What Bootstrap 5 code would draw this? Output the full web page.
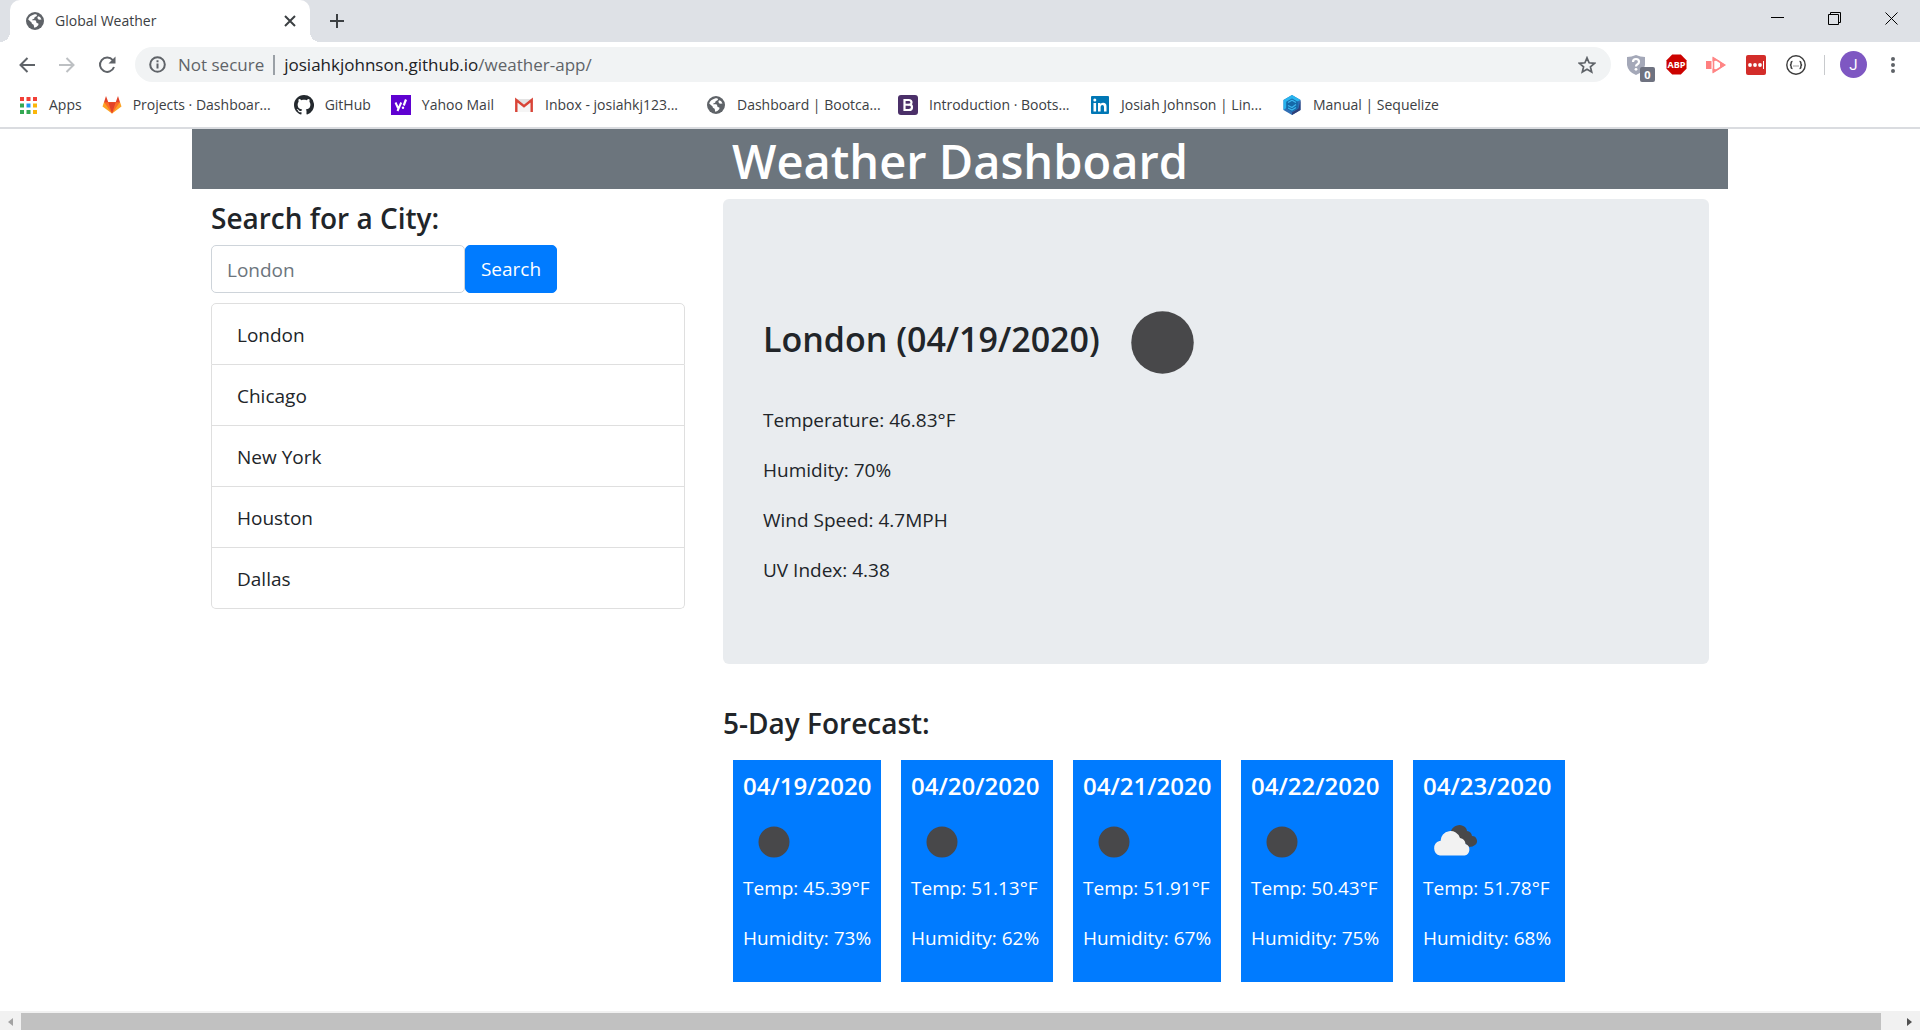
<!DOCTYPE html>
<html lang="en">
<head>
<meta charset="utf-8">
<meta name="viewport" content="width=device-width, initial-scale=1">
<title>Global Weather</title>
<link rel="stylesheet" href="https://cdn.jsdelivr.net/npm/bootstrap@5.3.0/dist/css/bootstrap.min.css">
<style>
:root{--blue:#007bff;--chrome:#dee1e6;--ink:#212529;--glyph:#5f6368}
body{font-family:"Open Sans","Noto Sans",sans-serif;font-size:19px;line-height:30px;color:var(--ink);background:#fff;min-height:100vh}
svg{display:block;flex:none}
button.bare{border:0;background:none;padding:0;color:inherit;display:flex;align-items:center;justify-content:center}
/* browser frame */
.frame-text{font-size:14px;line-height:20px;color:#3c4043}
.tabstrip{background:var(--chrome);height:42px;padding-left:10px}
.tab{position:relative;width:300px;height:42px;padding:0 14px 0 16px;background:#fff;border-radius:10px 10px 0 0;gap:11px}
.tab::before,.tab::after{content:"";position:absolute;bottom:0;width:10px;height:10px}
.tab::before{left:-10px;background:radial-gradient(circle at 0 0,transparent 10px,#fff 10px)}
.tab::after{right:-10px;background:radial-gradient(circle at 100% 0,transparent 10px,#fff 10px)}
.new-tab{width:54px}
.win-btn{width:57px;height:36px}
.toolbar{height:45px;padding:0 7px}
.tool-btn{width:40px;height:36px;color:var(--glyph)}
.omnibox{height:35px;border-radius:18px;background:#f1f3f4;padding:0 15px 0 14px;margin-left:8px;margin-right:5px;font-size:17px;color:var(--glyph)}
.omnibox .divider{width:2px;height:20px;background:#9aa0a6;margin:0 9px}
.toolbar .split{width:1px;height:20px;background:#c8cacd;margin:0 8px}
.address{color:var(--glyph);min-width:0}
.host{color:#202124}
.ext-badge{position:absolute;left:24px;top:20px;width:15px;height:15px;border-radius:2px;background:#6e7280;color:#fff;font-size:11px;line-height:15px;text-align:center;font-weight:700}
.bookmarks{height:42px;padding:0 18px 4px;gap:20px;border-bottom:2px solid #dadce0}
.bookmarks a{display:flex;align-items:center;gap:11px;color:#3c4043;text-decoration:none;white-space:nowrap}
.bookmarks a.long{width:172px}
/* weather page */
.page{width:80%}
.title{font-size:47px;line-height:56px;padding-top:4px;font-weight:600;background:#6c757d;color:#fff;margin:0 0 10px}
.page-row{--bs-gutter-x:38px;margin:0}
.section-title{font-size:28px;line-height:34px;padding-top:2px;font-weight:600;margin:0 0 10px}
.city-input{width:254px;height:48px;border:1px solid #ced4da;border-radius:5px;padding:2px 15px 0;font-size:19px;color:var(--ink)}
.city-input::placeholder{color:#6c757d;opacity:1}
.go-btn{--bs-btn-bg:var(--blue);--bs-btn-border-color:var(--blue);--bs-btn-border-radius:5px;--bs-btn-font-size:19px;--bs-btn-padding-x:0;width:92px;height:48px}
.cities{--bs-list-group-border-radius:5px;--bs-list-group-item-padding-x:25px;--bs-list-group-color:var(--ink);--bs-list-group-border-color:#dfdfdf;margin-top:10px}
.cities .list-group-item{padding-top:16px;padding-bottom:14px}
.today{background:#e9ecef;border-radius:6px;padding:81px 40px 79px;margin-bottom:40px}
.today h3{font-size:34px;line-height:40px;font-weight:600}
.today p,.day p{margin:0 0 20px}
.forecast{gap:20px;padding:10px 0 0 10px}
.day{background:var(--blue);color:#fff;padding:11px 10px 9px;width:152px;white-space:nowrap}
.day.narrow{width:148px}
.day h5{font-size:24px;line-height:30px;font-weight:600;margin:0 -10px 10px 0}
.hbar{height:19px;background:#f1f1f1;padding-top:2px}
.hbar .arrow{width:21px;height:17px}
.hbar .thumb{background:#c1c1c1}
.hbar .tail{width:39px}
</style>
</head>
<body class="d-flex flex-column">
<svg width="0" height="0" class="position-absolute">
  <symbol id="globe" viewBox="0 0 18 18"><circle cx="9" cy="9" r="9" fill="#5f6368"/><path d="M8.500 2.200L9.800 2.200Q11.300 2.500 11 3.500T9.500 4.700Q8.300 5 8.400 6T7 7.200Q5.600 7.500 6.200 8.300L9 8.300Q10.300 8.500 10.300 10T12 11.300Q13 12 12.200 13.200Q10.500 15.600 8.300 15.700L7.900 14Q8 12.500 6.700 12.200T5.600 10.500L2.200 7.600Q3.200 3.700 8.500 2.200Z" fill="#fff"/><path d="M12 4.200l2 .8 1.500 2.500-2.700.3-1.500-1.800z" fill="#fff"/></symbol>
  <symbol id="newmoon" viewBox="0 0 100 100"><circle cx="50" cy="50" r="25" fill="#48484a"/></symbol>
  <symbol id="clouds" viewBox="0 0 62 62"><path d="M28 20a9 9 0 0 1 14-4q2 2 2 4a6 6 0 0 1 5 5 5 5 0 0 1 3 9q-2 2-6 2z" fill="#48484a"/><path d="M17 44.500a7.500 7.500 0 0 1-.5-14.500h1a10 10 0 0 1 19.500-3 6.500 6.500 0 0 1 5.500 6 6 6 0 0 1-1 11.500z" fill="#f2f2f2"/></symbol>
</svg>

<header class="frame-text">
  <div class="tabstrip d-flex">
    <div class="tab d-flex align-items-center">
      <svg width="18" height="18"><use href="#globe"/></svg>
      <span class="flex-grow-1">Global Weather</span>
      <button class="bare" aria-label="Close tab"><svg width="12" height="12" viewBox="0 0 12 12" stroke="#3c4043" stroke-width="2"><path d="M1 1l10 10M11 1L1 11"/></svg></button>
    </div>
    <button class="bare new-tab" aria-label="New tab"><svg width="16" height="16" viewBox="0 0 16 16" stroke="#3c4043" stroke-width="2"><path d="M8 1v14M1 8h14"/></svg></button>
    <div class="d-flex ms-auto">
      <button class="bare win-btn" aria-label="Minimize"><svg width="13" height="13" viewBox="0 0 13 13" stroke="#000"><path d="M0 5.500h13"/></svg></button>
      <button class="bare win-btn" aria-label="Restore"><svg width="13" height="13" viewBox="0 0 13 13" fill="none" stroke="#000"><path d="M.5 2.500h10v10H.5zM2.500 2.500v-2h10v10h-2"/></svg></button>
      <button class="bare win-btn" aria-label="Close"><svg width="13" height="13" viewBox="0 0 13 13" stroke="#000"><path d="M.5.5l12 12M12.500.5l-12 12"/></svg></button>
    </div>
  </div>

  <div class="toolbar d-flex align-items-center">
    <button class="bare tool-btn" aria-label="Back"><svg width="16" height="16" viewBox="0 0 16 16" fill="none" stroke="#5f6368" stroke-width="2"><path d="M16 8H1.500M8.500 1L1.500 8l7 7"/></svg></button>
    <button class="bare tool-btn" aria-label="Forward"><svg width="16" height="16" viewBox="0 0 16 16" fill="none" stroke="#bdc0c3" stroke-width="2"><path d="M0 8h14.500M7.500 1l7 7-7 7"/></svg></button>
    <button class="bare tool-btn" aria-label="Reload"><svg width="18" height="18" viewBox="0 0 18 18" fill="none" stroke="#5f6368" stroke-width="2"><path d="M14.800 4.200A7.200 7.200 0 1 0 16 11"/><path d="M17.500.5v7h-7z" fill="#5f6368" stroke="none"/></svg></button>
    <div class="omnibox d-flex align-items-center flex-grow-1">
      <svg width="17" height="17" viewBox="0 0 17 17" fill="none" stroke="#5f6368" stroke-width="2"><circle cx="8.500" cy="8.500" r="7.300"/><path d="M8.500 7.500v5M8.500 4.200v2"/></svg>
      <span class="ps-2 ms-1">Not secure</span>
      <span class="divider"></span>
      <a href="#" class="address text-decoration-none flex-grow-1"><span class="host">josiahkjohnson.github.io</span>/weather-app/</a>
      <button class="bare" aria-label="Bookmark this page"><svg width="18" height="18" viewBox="0 0 18 18" fill="none" stroke="#5f6368" stroke-width="1.700"><path d="M9 1.800l2.100 5 5.400.5-4.100 3.500 1.300 5.300L9 13.300l-4.700 2.800 1.300-5.300L1.500 7.300l5.400-.5z"/></svg></button>
    </div>
    <button class="bare tool-btn position-relative" aria-label="Shield"><svg width="20" height="20" viewBox="0 0 20 20"><path d="M10 0q4.500 2 9 2v8q-1 7-9 10-8-3-9-10V2q4.500 0 9-2z" fill="#a4a8b8"/><path d="M7 7q0-3 3-3t3 2.700q0 1.800-1.800 2.800-1.200.7-1.200 2" fill="none" stroke="#fff" stroke-width="2.200"/><circle cx="10" cy="14.300" r="1.400" fill="#fff"/></svg><span class="ext-badge">0</span></button>
    <button class="bare tool-btn" aria-label="Adblock Plus"><svg width="21" height="21" viewBox="0 0 21 21"><path d="M6.200.5h8.600l5.700 5.700v8.600l-5.700 5.700H6.200L.5 14.800V6.200z" fill="#cc0200"/><text x="10.500" y="13.800" fill="#fff" font-size="9" font-weight="700" text-anchor="middle" font-family="Open Sans">ABP</text></svg></button>
    <button class="bare tool-btn" aria-label="Screen recorder"><svg width="20" height="18" viewBox="0 0 20 18"><path d="M0 5h5.500v8H0z" fill="#ff7f7f"/><path d="M6.500 1v4.500l2-.5a4.500 4.500 0 0 1 4 0l1 1V5zM6.500 17v-4.500l2 .5a4.500 4.500 0 0 0 4 0l1-1v1z" fill="#ff8585"/><path d="M7.500 2v14L18.500 9z" fill="none" stroke="#ff8585" stroke-width="1.600"/><path d="M14 5.500v7L19.500 9z" fill="#ff8585"/></svg></button>
    <button class="bare tool-btn" aria-label="Password manager"><svg width="20" height="20" viewBox="0 0 20 20"><rect width="20" height="20" rx="2" fill="#d32d2a"/><g fill="#fff"><circle cx="4" cy="10" r="1.900"/><circle cx="9" cy="10" r="1.900"/><circle cx="14" cy="10" r="1.900"/><path d="M17 6h1v8h-1z"/></g></svg></button>
    <button class="bare tool-btn" aria-label="JSON viewer"><svg width="20" height="20" viewBox="0 0 20 20" fill="none" stroke="#3c3c3c"><circle cx="10" cy="10" r="9.200" stroke-width="1.400"/><path d="M6.500 6.500q-1.500 0-1.300 1.500 0 1.800-1.200 2 1.200.2 1.200 2-.2 1.500 1.300 1.500M13.500 6.500q1.500 0 1.300 1.500 0 1.800 1.200 2-1.200.2-1.200 2 .2 1.500-1.300 1.500" stroke-width="1.500"/><path d="M7.500 11h1M9.500 11h1M11.500 11h1"/></svg></button>
    <span class="split"></span>
    <button class="bare tool-btn" aria-label="Profile"><svg width="27" height="27" viewBox="0 0 27 27"><circle cx="13.500" cy="13.500" r="13.500" fill="#7e57c2"/><text x="13.500" y="19" fill="#fff" font-size="15" text-anchor="middle" font-family="Roboto">J</text></svg></button>
    <button class="bare tool-btn" aria-label="Menu"><svg width="4" height="16" viewBox="0 0 4 16" fill="#5f6368"><circle cx="2" cy="2" r="2"/><circle cx="2" cy="8" r="2"/><circle cx="2" cy="14" r="2"/></svg></button>
  </div>

  <nav class="bookmarks d-flex align-items-center" aria-label="Bookmarks">
    <a href="#"><svg width="20" height="20" viewBox="0 0 20 20"><path d="M2 2h4v4H2zM8.500 2h4v4h-4zM15 2h4v4h-4z" fill="#f23f36"/><path d="M2 8.500h4v4H2zM2 15h4v4H2zM8.500 15h4v4h-4z" fill="#34a853"/><path d="M8.500 8.500h4v4h-4z" fill="#2196f3"/><path d="M15 8.500h4v4h-4zM15 15h4v4h-4z" fill="#fbb60a"/></svg>Apps</a>
    <a href="#" class="long"><svg width="20" height="20" viewBox="0 0 20 20"><path d="M10 18.500L.5 11.500 2 7h16l1.500 4.500z" fill="#fca326"/><path d="M10 18.500L2 7h16z" fill="#fc6d26"/><path d="M10 18.500L6.300 7.300h7.400zM2 7.300L4 1l2.300 6.300zM18 7.300L16 1l-2.300 6.300z" fill="#e24329"/></svg>Projects · Dashboar...</a>
    <a href="#"><svg width="20" height="20" viewBox="0 0 16 16" fill="#24292e"><path d="M8 0C3.580 0 0 3.580 0 8c0 3.540 2.290 6.530 5.470 7.590.4.070.55-.17.55-.38 0-.19-.01-.82-.01-1.490-2.010.37-2.530-.49-2.690-.94-.09-.23-.48-.94-.82-1.130-.28-.15-.68-.52-.01-.53.63-.01 1.080.58 1.230.82.72 1.210 1.870.87 2.330.66.070-.52.280-.87.510-1.070-1.780-.2-3.640-.89-3.640-3.950 0-.87.310-1.590.820-2.150-.08-.2-.36-1.020.080-2.120 0 0 .67-.21 2.200.82.640-.18 1.320-.27 2-.27s1.360.09 2 .27c1.530-1.040 2.200-.82 2.200-.82.440 1.100.160 1.920.080 2.120.510.560.820 1.270.820 2.150 0 3.070-1.870 3.750-3.650 3.950.290.250.540.730.540 1.480 0 1.070-.01 1.930-.01 2.200 0 .210.150.460.550.380A8 8 0 0 0 8 0z"/></svg>GitHub</a>
    <a href="#"><svg width="20" height="20" viewBox="0 0 20 20"><path d="M0 0h20v20H0z" fill="#5f01d1"/><path d="M4.500 7.500l2.500 5.500M10.200 7.500L6.500 16" stroke="#fff" stroke-width="2"/><path d="M15 4.500l-2.300 6" stroke="#fff" stroke-width="2.200"/><circle cx="12" cy="12.700" r="1.200" fill="#fff"/></svg>Yahoo Mail</a>
    <a href="#" class="long"><svg width="20" height="20" viewBox="0 0 20 20"><path d="M1.500 4h17v13h-17z" fill="#e3e3e3"/><path d="M3 6l7 6 7-6v11H3z" fill="#f5f5f5"/><path d="M2.300 17V5L10 11.300 17.700 5v12" fill="none" stroke="#d94437" stroke-width="2.400"/></svg>Inbox - josiahkj123...</a>
    <a href="#" class="long"><svg width="20" height="18"><use href="#globe"/></svg>Dashboard | Bootca...</a>
    <a href="#" class="long"><svg width="20" height="20" viewBox="0 0 20 20"><rect width="20" height="20" rx="3" fill="#4b3069"/><path d="M6.500 5h4.200q2.800 0 2.800 2.400 0 1.700-1.500 2.200 2 .5 2 2.600 0 2.800-3.200 2.800H6.500z" fill="none" stroke="#fff" stroke-width="2.200"/><path d="M6.500 9.700h5" stroke="#fff" stroke-width="2"/></svg>Introduction · Boots...</a>
    <a href="#" class="long"><svg width="20" height="20" viewBox="0 0 20 20"><rect x="1" y="1" width="18" height="18" rx="1" fill="#0077b5"/><path d="M3.500 8h2.600v8.500H3.500zM8 8h2.500v1.200q.8-1.400 2.700-1.400 3.300 0 3.300 3.700v5H14V12q0-2-1.600-2-1.800 0-1.800 2v4.500H8z" fill="#fff"/><circle cx="4.800" cy="5" r="1.500" fill="#fff"/></svg>Josiah Johnson | Lin...</a>
    <a href="#"><svg width="20" height="20" viewBox="0 0 20 20"><path d="M10 0l8.500 5v10L10 20l-8.500-5V5z" fill="#2f6fb5"/><path d="M10 0l8.500 5L10 9 1.500 15V5z" fill="#28b4ee"/><path d="M18.500 5v10L10 20v-2.500l6.500-4z" fill="#2f3f78"/><path d="M10 3.500l5.800 3.300v6.600L10 16.700l-5.800-3.300V6.800z" fill="#1569a8"/><path d="M6 7.500l4-2.200 4 2.200M6 10.500l4 2 4-3M6 13l4 2 4-2.500" fill="none" stroke="#3bb5ee" stroke-width="1.200"/></svg>Manual | Sequelize</a>
  </nav>
</header>

<main class="page mx-auto flex-grow-1">
  <h1 class="title text-center">Weather Dashboard</h1>
  <div class="row page-row">
    <aside class="col-4">
      <form>
        <label for="city" class="section-title">Search for a City:</label>
        <div class="d-flex">
          <input id="city" class="city-input" type="text" placeholder="London">
          <button type="button" class="btn btn-primary go-btn">Search</button>
        </div>
      </form>
      <ul class="list-group cities">
        <li class="list-group-item">London</li>
        <li class="list-group-item">Chicago</li>
        <li class="list-group-item">New York</li>
        <li class="list-group-item">Houston</li>
        <li class="list-group-item">Dallas</li>
      </ul>
    </aside>
    <div class="col-8">
      <section class="today">
        <div class="d-flex align-items-center">
          <h3 class="m-0 pb-2">London (04/19/2020)</h3>
          <svg width="125" height="125" role="img" aria-label="Clear night"><use href="#newmoon"/></svg>
        </div>
        <p>Temperature: 46.83°F</p>
        <p>Humidity: 70%</p>
        <p>Wind Speed: 4.7MPH</p>
        <p class="mb-0">UV Index: 4.38</p>
      </section>
      <h4 class="section-title">5-Day Forecast:</h4>
      <div class="forecast d-flex">
        <article class="day narrow"><h5>04/19/2020</h5><svg width="62" height="62"><use href="#newmoon"/></svg><p>Temp: 45.39°F</p><p>Humidity: 73%</p></article>
        <article class="day"><h5>04/20/2020</h5><svg width="62" height="62"><use href="#newmoon"/></svg><p>Temp: 51.13°F</p><p>Humidity: 62%</p></article>
        <article class="day narrow"><h5>04/21/2020</h5><svg width="62" height="62"><use href="#newmoon"/></svg><p>Temp: 51.91°F</p><p>Humidity: 67%</p></article>
        <article class="day"><h5>04/22/2020</h5><svg width="62" height="62"><use href="#newmoon"/></svg><p>Temp: 50.43°F</p><p>Humidity: 75%</p></article>
        <article class="day"><h5>04/23/2020</h5><svg width="62" height="62"><use href="#clouds"/></svg><p>Temp: 51.78°F</p><p>Humidity: 68%</p></article>
      </div>
    </div>
  </div>
</main>

<footer class="hbar d-flex">
  <button class="bare arrow" aria-label="Scroll left"><svg width="5" height="8" viewBox="0 0 5 8"><path d="M5 0v8L0 4z" fill="#a3a3a3"/></svg></button>
  <div class="thumb flex-grow-1"></div>
  <div class="tail d-flex justify-content-end"><button class="bare arrow" aria-label="Scroll right"><svg width="5" height="8" viewBox="0 0 5 8"><path d="M0 0v8l5-4z" fill="#505050"/></svg></button></div>
</footer>
<script src="https://cdn.jsdelivr.net/npm/bootstrap@5.3.0/dist/js/bootstrap.bundle.min.js"></script>
</body>
</html>
